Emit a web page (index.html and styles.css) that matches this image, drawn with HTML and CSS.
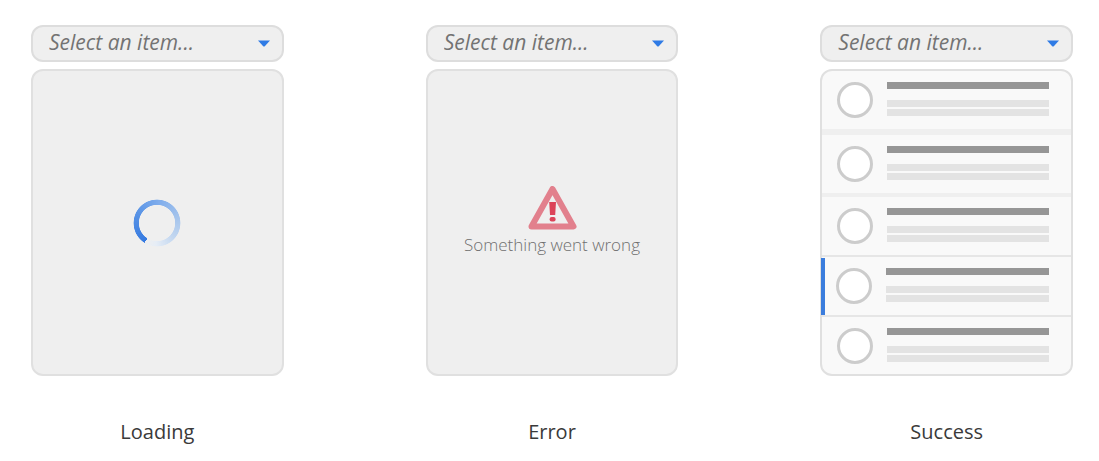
FILE: index.html
```html
<!DOCTYPE html>
<html lang="en">
<head>
  <meta charset="utf-8">
  <title>Select states</title>
  <link rel="stylesheet" href="styles.css">
</head>
<body>
  <main class="states">
    <figure class="state">
      <div class="picker">
        <select class="picker-select" aria-label="Item, loading"><option>Select an item...</option></select>
        <svg class="picker-arrow" viewBox="0 0 12 7" aria-hidden="true"><path d="M0 0.5H12L6.8 6.2Q6 7 5.2 6.2Z"/></svg>
      </div>
      <div class="panel panel-message">
        <div class="spinner" role="status" aria-label="Loading items"></div>
      </div>
      <figcaption class="caption">Loading</figcaption>
    </figure>

    <figure class="state">
      <div class="picker">
        <select class="picker-select" aria-label="Item, error"><option>Select an item...</option></select>
        <svg class="picker-arrow" viewBox="0 0 12 7" aria-hidden="true"><path d="M0 0.5H12L6.8 6.2Q6 7 5.2 6.2Z"/></svg>
      </div>
      <div class="panel panel-message">
        <svg class="warning" viewBox="0 0 50 44" aria-hidden="true">
          <path class="warning-frame" d="M25.5 3L46.5 40.5H4.5Z"/>
          <path class="warning-mark" d="M22.2 16H29L28.2 29H23Z"/>
          <rect class="warning-mark" x="22.6" y="31" width="6" height="4.5" rx="2"/>
        </svg>
        <p class="error-text">Something went wrong</p>
      </div>
      <figcaption class="caption">Error</figcaption>
    </figure>

    <figure class="state">
      <div class="picker">
        <select class="picker-select" aria-label="Item, success"><option>Select an item...</option></select>
        <svg class="picker-arrow" viewBox="0 0 12 7" aria-hidden="true"><path d="M0 0.5H12L6.8 6.2Q6 7 5.2 6.2Z"/></svg>
      </div>
      <ul class="panel list">
        <li class="row row-wide"><span class="avatar"></span><span class="lines"><span class="line-title"></span><span class="line"></span><span class="line"></span></span></li>
        <li class="row row-medium"><span class="avatar"></span><span class="lines"><span class="line-title"></span><span class="line"></span><span class="line"></span></span></li>
        <li class="row row-thin"><span class="avatar"></span><span class="lines"><span class="line-title"></span><span class="line"></span><span class="line"></span></span></li>
        <li class="row row-thin row-selected"><span class="avatar"></span><span class="lines"><span class="line-title"></span><span class="line"></span><span class="line"></span></span></li>
        <li class="row row-last"><span class="avatar"></span><span class="lines"><span class="line-title"></span><span class="line"></span><span class="line"></span></span></li>
      </ul>
      <figcaption class="caption">Success</figcaption>
    </figure>
  </main>
</body>
</html>
```

FILE: styles.css
```css
* {
  box-sizing: border-box;
}

body {
  margin: 0;
  background: #fff;
  font-family: "Open Sans", "Noto Sans", sans-serif;
}

.states {
  display: grid;
  grid-template-columns: repeat(3, 1fr);
  gap: 142px;
  padding: 25px 26px 0 31px;
}

.state {
  display: flex;
  flex-direction: column;
  margin: 0;
}

.picker {
  display: grid;
  align-items: center;
  margin-bottom: 7px;
}

.picker-select,
.picker-arrow {
  grid-area: 1 / 1;
}

.picker-select {
  appearance: none;
  width: 100%;
  height: 37px;
  margin: 0;
  padding: 0 40px 4px 16px;
  border: 2px solid #ddd;
  border-radius: 12px;
  background: #efefef;
  color: #737373;
  font-family: inherit;
  font-size: 21px;
  font-style: italic;
}

.picker-arrow {
  justify-self: end;
  width: 12px;
  height: 7px;
  margin-right: 14px;
  fill: #2f7be5;
  pointer-events: none;
}

.panel {
  flex: 1;
  margin: 0;
  padding: 0;
  border: 2px solid #e0e0e0;
  border-radius: 12px;
  background: #efefef;
}

.panel-message {
  display: flex;
  flex-direction: column;
  align-items: center;
  justify-content: center;
}

.spinner {
  width: 48px;
  height: 48px;
  border-radius: 50%;
  background: conic-gradient(from 212deg, #3479e0, #5b95e6 25%, #7eacec 42%, #a5c4ec 62%, #c3d7f0 78%, #e6edf6 92%, #efefef);
  mask: radial-gradient(closest-side, transparent 74%, #000 77%, #000 96%, transparent 99%);
}

.warning {
  width: 50px;
  height: 44px;
}

.warning-frame {
  fill: none;
  stroke: #e2808d;
  stroke-width: 6;
  stroke-linejoin: round;
}

.warning-mark {
  fill: #dc4359;
}

.error-text {
  margin: 0;
  color: #707070;
  font-size: 17px;
  font-weight: 300;
  line-height: 30px;
  white-space: nowrap;
}

.list {
  background: #f9f9f9;
  list-style: none;
}

.row {
  display: flex;
  gap: 14px;
  padding: 11px 22px 11px 15px;
  border-bottom: 0 solid #efefef;
}

.row-wide {
  border-bottom-width: 6px;
}

.row-medium {
  border-bottom-width: 4px;
}

.row-thin {
  border-bottom: 2px solid #e6e6e6;
}

.row-last {
  padding-bottom: 10px;
}

.row-selected {
  position: relative;
  padding-left: 14px;
}

.row-selected::before {
  content: "";
  position: absolute;
  top: 1px;
  bottom: 0;
  left: -1px;
  width: 4px;
  background: #3b7ddd;
}

.avatar {
  flex: none;
  width: 36px;
  height: 36px;
  border: 3px solid #ccc;
  border-radius: 50%;
  background: #fff;
}

.lines {
  display: flex;
  flex: 1;
  flex-direction: column;
  gap: 2px;
}

.line-title,
.line {
  height: 7px;
}

.line-title {
  margin-bottom: 9px;
  background: #969696;
}

.line {
  background: #e3e3e3;
}

.caption {
  padding-top: 42px;
  color: #3a3a3a;
  font-size: 20px;
  line-height: 28px;
  text-align: center;
}
```
